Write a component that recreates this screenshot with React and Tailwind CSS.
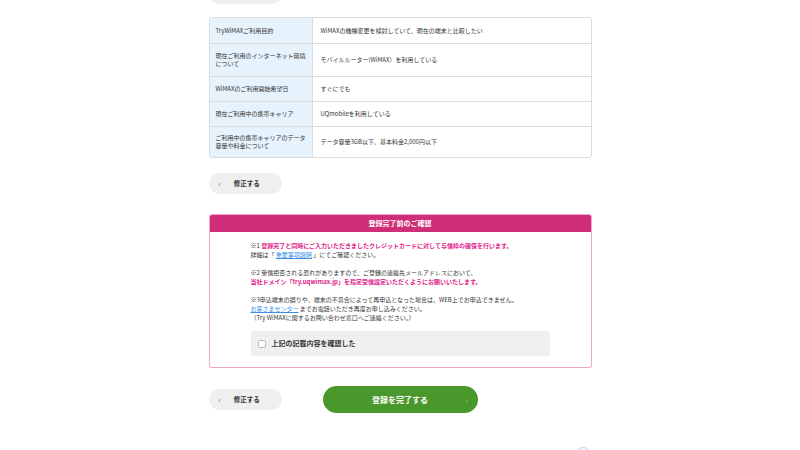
import React from "react";

const rows = [
  ["TryWiMAXご利用目的", "WiMAXの機種変更を検討していて、現在の端末と比較したい", "h-[25px]"],
  ["現在ご利用のインターネット環境について", "モバイルルーター(WiMAX）を利用している", "h-[33px]"],
  ["WiMAXのご利用開始希望日", "すぐにでも", "h-[25px]"],
  ["現在ご利用中の携帯キャリア", "UQmobileを利用している", "h-[25px]"],
  ["ご利用中の携帯キャリアのデータ容量や料金について", "データ容量3GB以下、基本料金2,000円以下", "h-[31px]"],
];

function BackButton({ className = "" }) {
  return (
    <div className={`w-[73px] h-[21px] rounded-full bg-[#efefef] flex items-center ${className}`}>
      <span className="ml-[10px] text-[7px] text-[#555] leading-none">‹</span>
      <span className="ml-[13px] text-[6.5px] font-bold text-[#333] leading-none">修正する</span>
    </div>
  );
}

export default function App() {
  return (
    <div
      className="relative w-[800px] h-[450px] overflow-hidden bg-white text-[#333]"
      style={{ fontFamily: '"Noto Sans CJK JP", "Noto Sans", sans-serif' }}
    >
      <div className="mx-auto w-[383px] flex flex-col">
        <div className="-mt-[17px] w-[73px] h-[21px] rounded-full bg-[#efefef]" />

        <div className="mt-[13px] border border-[#dcdcdc] rounded-[3px] overflow-hidden">
          {rows.map(([k, v, h], i) => (
            <div key={i} className={`flex ${h} ${i > 0 ? "border-t border-[#dcdcdc]" : ""}`}>
              <div className="w-[103px] shrink-0 bg-[#e6f2fc] border-r border-[#dcdcdc] px-[6px] flex items-center text-[6px] leading-[8px]">
                {k}
              </div>
              <div className="flex-1 pl-[8px] flex items-center text-[6px] leading-[8px]">{v}</div>
            </div>
          ))}
        </div>

        <BackButton className="mt-[15px]" />

        <div className="mt-[20px] rounded-[3px] bg-[#f0a6c8] p-px">
          <div className="rounded-[2px] overflow-hidden bg-white">
            <div className="h-[17px] bg-[#cf2e78] flex items-center justify-center text-white text-[7px] font-bold">
              登録完了前のご確認
            </div>
            <div className="px-[41px] pt-[9px] pb-[11px] text-[6px] leading-[9px]">
              <p>
                ※1 <span className="text-[#e0218a] font-bold">登録完了と同時にご入力いただきましたクレジットカードに対して与信枠の確保を行います。</span>
                <br />
                詳細は「 <span className="text-[#3b8fe6] underline">重要事項説明</span> 」にてご確認ください。
              </p>
              <p className="mt-[9px]">
                ※2 受信拒否される恐れがありますので、ご登録の連絡先メールアドレスにおいて、
                <br />
                <span className="text-[#e0218a] font-bold">当社ドメイン「try.uqwimax.jp」を指定受信設定いただくようにお願いいたします。</span>
              </p>
              <p className="mt-[9px]">
                ※3申込端末の誤りや、端末の不具合によって再申込となった場合は、WEB上でお申込できません。
                <br />
                <span className="text-[#3b8fe6] underline">お客さまセンター</span> までお電話いただき再度お申し込みください。
                <br />
                （Try WiMAXに関するお問い合わせ窓口へご連絡ください。）
              </p>
              <div className="mt-[9px] h-[25px] rounded-[3px] bg-[#efefef] flex items-center px-[7px]">
                <div className="w-[8px] h-[8px] rounded-[2px] border border-[#bbb] bg-white" />
                <span className="ml-[6px] text-[7px] font-bold text-[#333]">上記の記載内容を確認した</span>
              </div>
            </div>
          </div>
        </div>

        <div className="mt-[18px] flex items-center">
          <BackButton />
          <div className="ml-[41px] w-[155px] h-[27px] rounded-full bg-[#4a982c] flex items-center relative">
            <span className="w-full text-center text-white text-[8px] font-bold">登録を完了する</span>
            <span className="absolute right-[10px] text-[7px] text-[#a9d49a] leading-none">›</span>
          </div>
        </div>
      </div>
      <div className="absolute left-[575px] top-[447px] w-[16px] h-[16px] rounded-full border border-[#c8d4e4] bg-[#f4f7fb]" />
    </div>
  );
}
